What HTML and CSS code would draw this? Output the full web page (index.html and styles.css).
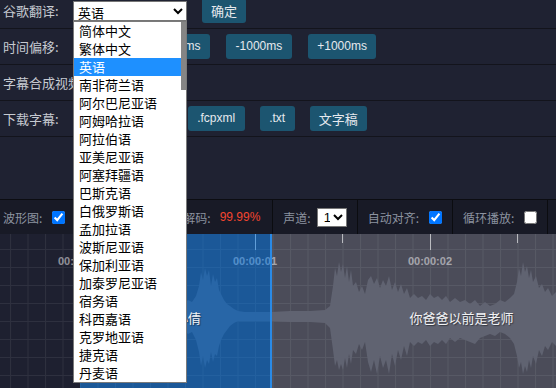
FILE: index.html
```html
<!DOCTYPE html>
<html lang="zh-CN">
<head>
<meta charset="utf-8">
<title>字幕编辑</title>
<link rel="stylesheet" href="styles.css">
</head>
<body>
<div class="panel">
  <div class="row">
    <span class="lbl">谷歌翻译:</span>
    <select class="sel-lang">
      <option>简体中文</option>
      <option>繁体中文</option>
      <option selected>英语</option>
      <option>南非荷兰语</option>
    </select>
    <button class="btn">确定</button>
  </div>
  <div class="row row-gap16">
    <span class="lbl lbl-54">时间偏移:</span>
    <button class="btn btn-en">-100ms</button>
    <button class="btn btn-en">+100ms</button>
    <button class="btn btn-en">-1000ms</button>
    <button class="btn btn-en">+1000ms</button>
  </div>
  <div class="row">
    <span class="lbl">字幕合成视频:</span>
  </div>
  <div class="row">
    <span class="lbl lbl-63">下载字幕:</span>
    <button class="btn btn-en">.srt</button>
    <button class="btn btn-en">.ass</button>
    <button class="btn btn-en">.fcpxml</button>
    <button class="btn btn-en">.txt</button>
    <button class="btn">文字稿</button>
  </div>
</div>
<div class="spacer"></div>
<div class="toolbar">
  <div class="cell cell-first"><span>波形图:</span><input type="checkbox" class="chk" checked></div>
  <div class="cell cell-decode"><span>视频解码:</span><span class="pct">99.99%</span></div>
  <div class="cell"><span>声道:</span><select class="sel-ch"><option>1</option><option>2</option></select></div>
  <div class="cell"><span>自动对齐:</span><input type="checkbox" class="chk" checked></div>
  <div class="cell"><span>循环播放:</span><input type="checkbox" class="chk"></div>
  <div class="cell cell-rest"></div>
</div>
<div class="wave">
  <svg class="wave-canvas" width="556" height="154" viewBox="0 0 556 154">
    <defs>
      <pattern id="grid" width="17.5" height="18" patternUnits="userSpaceOnUse" x="10" y="15">
        <path d="M0.5 0V18M0 0.5H17.5" stroke="rgba(255,255,255,0.07)" stroke-width="1" fill="none"/>
      </pattern>
    </defs>
    <rect x="0" y="0" width="556" height="154" fill="#1e2030"/>
    <rect x="0" y="0" width="556" height="154" fill="url(#grid)"/>
    <polygon fill="#393c4e" points="150,79 160,76 170,72 178,68 184,70 188,66 192,68 196,62 199,52 201,38 203,46 205,34 207,42 209,36 211,52 213,40 215,48 217,44 219,56 221,60 224,66 227,70 230,72 234,75 238,77 245,78 260,78 271,78 290,77 310,77 325,76 330,72 333,52 335,34 337,42 339,28 341,38 343,30 345,44 347,32 349,48 351,36 353,52 356,48 359,58 362,52 365,60 368,46 371,42 374,50 377,44 380,54 383,46 386,52 389,42 392,56 395,48 398,58 401,50 404,60 407,54 410,64 414,60 418,64 422,62 426,66 430,60 434,64 438,62 442,66 446,62 450,68 455,64 460,68 465,66 470,70 475,66 480,72 485,68 490,72 495,70 500,66 505,68 510,64 514,60 517,48 519,34 521,42 523,28 525,38 527,32 529,44 531,36 533,48 536,42 539,54 542,50 545,58 548,54 552,62 556,58 556,112 552,108 548,116 545,112 542,122 539,116 536,130 533,122 531,134 529,126 527,138 525,132 523,140 521,128 519,134 517,122 514,110 510,104 505,100 500,98 495,102 490,100 485,102 480,104 475,110 470,108 465,106 460,104 455,108 450,104 446,110 442,106 438,110 434,108 430,112 426,106 422,110 418,108 414,112 410,108 407,122 404,112 401,126 398,116 395,132 392,120 389,140 386,126 383,134 380,122 377,140 374,126 371,138 368,128 365,108 362,116 359,110 356,120 353,116 351,130 349,120 347,134 345,124 343,136 341,130 339,136 337,126 335,132 333,116 330,94 325,89 310,88 290,88 271,87 260,87 245,87 238,87 234,89 230,92 227,96 224,100 221,106 219,112 217,122 215,120 213,128 211,118 209,130 207,126 205,134 203,122 201,132 199,118 196,106 192,98 188,100 184,96 178,98 170,94 160,89 150,85"/>
    <g stroke="rgba(255,255,255,0.6)" stroke-width="1">
      <line x1="80.5" y1="0" x2="80.5" y2="16"/>
      <line x1="167.5" y1="0" x2="167.5" y2="9"/>
      <line x1="255.5" y1="0" x2="255.5" y2="16"/>
      <line x1="342.5" y1="0" x2="342.5" y2="9"/>
      <line x1="430.5" y1="0" x2="430.5" y2="16"/>
      <line x1="517.5" y1="0" x2="517.5" y2="9"/>
    </g>
    <g class="time">
      <text x="80" y="31">00:00:00</text>
      <text x="255" y="31">00:00:01</text>
      <text x="430" y="31">00:00:02</text>
    </g>
  </svg>
  <div class="sub sub-cur"><span>你好小倩</span></div>
  <div class="sub sub-next"><span>你爸爸以前是老师</span></div>
</div>
<div class="dropdown">
  <div class="opt">简体中文</div>
  <div class="opt">繁体中文</div>
  <div class="opt opt-on">英语</div>
  <div class="opt">南非荷兰语</div>
  <div class="opt">阿尔巴尼亚语</div>
  <div class="opt">阿姆哈拉语</div>
  <div class="opt">阿拉伯语</div>
  <div class="opt">亚美尼亚语</div>
  <div class="opt">阿塞拜疆语</div>
  <div class="opt">巴斯克语</div>
  <div class="opt">白俄罗斯语</div>
  <div class="opt">孟加拉语</div>
  <div class="opt">波斯尼亚语</div>
  <div class="opt">保加利亚语</div>
  <div class="opt">加泰罗尼亚语</div>
  <div class="opt">宿务语</div>
  <div class="opt">科西嘉语</div>
  <div class="opt">克罗地亚语</div>
  <div class="opt">捷克语</div>
  <div class="opt">丹麦语</div>
  <div class="thumb"></div>
</div>
</body>
</html>
```
FILE: styles.css
```css
* { box-sizing: border-box; }
html, body { margin: 0; padding: 0; }
body {
  width: 556px;
  height: 388px;
  overflow: hidden;
  position: relative;
  background: #1f2232;
  font-family: "Noto Sans CJK SC", "Noto Sans", sans-serif;
}
.panel { margin-top: -7px; }
.row {
  display: flex;
  align-items: center;
  gap: 15px;
  height: 36px;
  padding-left: 3px;
  border-bottom: 1px solid #13141c;
}
.row-gap16 { gap: 16px; }
.lbl {
  flex: none;
  width: 55px;
  white-space: nowrap;
  color: #c6cad1;
  font-size: 13px;
}
.lbl-54 { width: 54px; }
.lbl-63 { width: 63px; }
.btn {
  flex: none;
  height: 25px;
  padding: 0 9px;
  border: 0;
  border-radius: 3px;
  background: #1c5570;
  color: #e6e9ee;
  font-family: inherit;
  font-size: 13px;
  line-height: 25px;
}
.btn-en {
  padding: 0 9.5px;
  font-family: "Liberation Sans", "Noto Sans CJK SC", sans-serif;
  font-size: 12px;
}
.sel-lang {
  flex: none;
  width: 114px;
  height: 20px;
  font-family: inherit;
  font-size: 13px;
  background: #fff;
  color: #000;
  border: 1px solid #767676;
  border-radius: 0;
}
.spacer { height: 62px; }
.toolbar {
  display: flex;
  height: 35px;
  border-top: 1px solid #0c0d12;
  background: #181a26;
  color: #8c93a0;
  font-size: 12px;
}
.cell {
  flex: none;
  display: flex;
  align-items: center;
  padding: 0 10px;
  border-right: 1px solid #0b0c10;
  white-space: nowrap;
}
.cell-first { padding-left: 3px; }
.cell-decode { width: 197px; justify-content: flex-end; padding-right: 12px; }
.cell-rest { width: 20px; border-right: 0; }
.pct {
  margin-left: 9px;
  color: #f4452f;
  font-family: "Liberation Sans", sans-serif;
}
.chk {
  width: 13px;
  height: 13px;
  margin: 0 0 0 10px;
}
.sel-ch {
  width: 30px;
  height: 19px;
  margin-left: 6px;
  font-family: "Liberation Sans", sans-serif;
  font-size: 13px;
  background: #fff;
  color: #000;
  border: 1px solid #767676;
  border-radius: 0;
  padding: 0 0 0 2px;
}
.wave {
  position: relative;
  height: 154px;
  overflow: hidden;
}
.wave-canvas { display: block; }
.time text {
  font-family: "Liberation Sans", sans-serif;
  font-size: 11px;
  font-weight: 700;
  fill: rgba(255,255,255,0.5);
  text-anchor: middle;
}
.sub {
  position: absolute;
  top: 0;
  height: 154px;
  display: flex;
  justify-content: center;
  padding-top: 13px;
  align-items: center;
  color: #f2f3f5;
  font-size: 13px;
  text-shadow: 1px 1px 1px rgba(0,0,0,0.45);
  white-space: nowrap;
}
.sub-cur {
  left: 80px;
  width: 192px;
  background: rgba(24,144,255,0.5);
  border-right: 2px solid #2a8ae6;
}
.sub-next {
  left: 272px;
  width: 379px;
  background: rgba(255,255,255,0.2);
}
.dropdown {
  position: absolute;
  left: 73px;
  top: 21px;
  width: 114px;
  height: 362px;
  background: #fff;
  border: 1px solid #7a7a7a;
  padding-right: 5px;
  overflow: hidden;
}
.opt {
  height: 18px;
  line-height: 18px;
  padding-left: 5px;
  font-size: 13px;
  color: #000;
  white-space: nowrap;
}
.opt-on { background: #1e90ff; color: #fff; }
.thumb {
  position: absolute;
  right: 0;
  top: 0;
  width: 5px;
  height: 68px;
  background: #858585;
}
```
